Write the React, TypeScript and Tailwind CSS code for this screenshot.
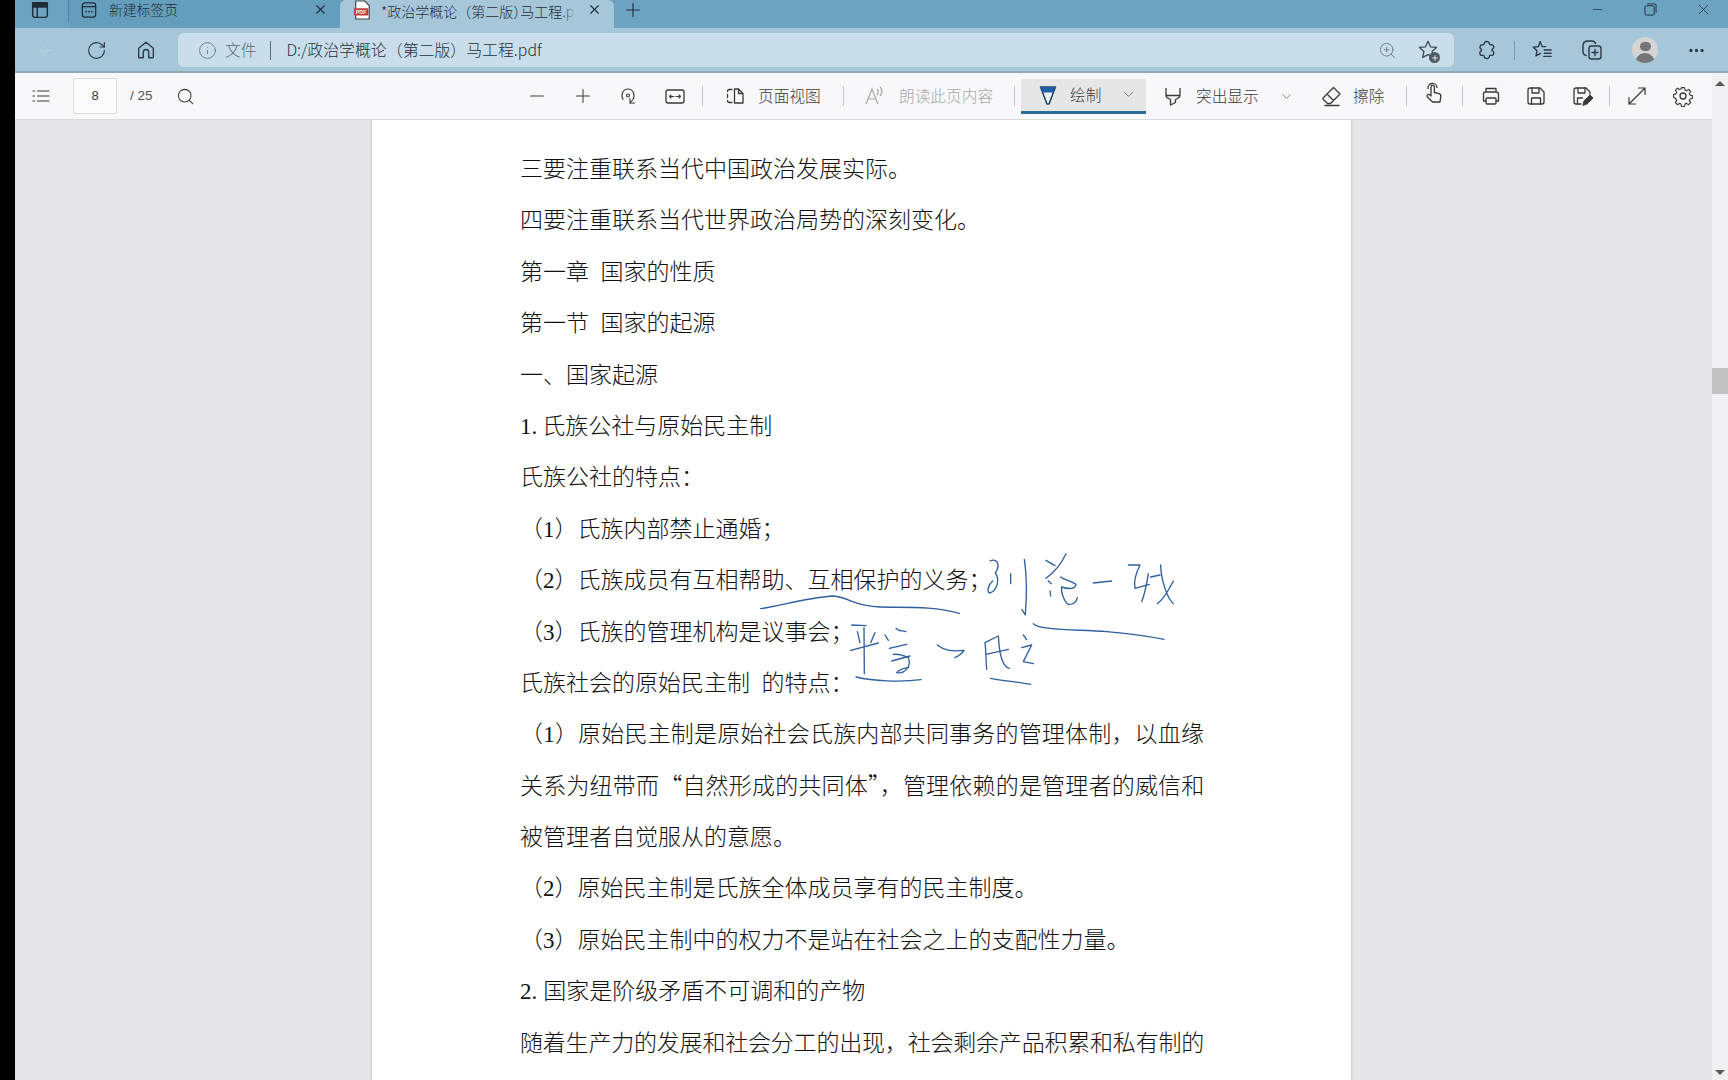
import type { ReactNode } from 'react';
import { ArrowLeft, ChevronDown, Info, Minus, MoreHorizontal, Plus, RotateCw, Search, X, ZoomIn } from 'lucide-react';

const BODY_FONT = 'font-["Liberation_Serif","Noto_Sans_CJK_SC",serif]';

type Line = { text: ReactNode; justify?: boolean; tight?: boolean };

const LINES: Line[] = [
  { text: '三要注重联系当代中国政治发展实际。' },
  { text: '四要注重联系当代世界政治局势的深刻变化。' },
  { text: '第一章  国家的性质' },
  { text: '第一节  国家的起源' },
  { text: '一、国家起源' },
  { text: <>1.<span className="ml-[5px]">氏族公社与原始民主制</span></> },
  { text: '氏族公社的特点：' },
  { text: '（1）氏族内部禁止通婚；' },
  { text: '（2）氏族成员有互相帮助、互相保护的义务；' },
  { text: '（3）氏族的管理机构是议事会；' },
  { text: '氏族社会的原始民主制  的特点：' },
  { text: '（1）原始民主制是原始社会氏族内部共同事务的管理体制，以血缘', justify: true },
  { text: <>关系为纽带而<span className="font-['Noto_Sans_CJK_SC'] leading-[0]">“</span>自然形成的共同体<span className="font-['Noto_Sans_CJK_SC'] leading-[0]">”</span>，管理依赖的是管理者的威信和</>, justify: true, tight: true },
  { text: '被管理者自觉服从的意愿。' },
  { text: '（2）原始民主制是氏族全体成员享有的民主制度。' },
  { text: '（3）原始民主制中的权力不是站在社会之上的支配性力量。' },
  { text: <>2.<span className="ml-[6px]">国家是阶级矛盾不可调和的产物</span></> },
  { text: '随着生产力的发展和社会分工的出现，社会剩余产品积累和私有制的', justify: true, tight: true },
];

function Ico({ children, className = '' }: { children: ReactNode; className?: string }) {
  return (
    <svg viewBox="0 0 24 24" fill="none" stroke="currentColor" strokeWidth="1.5" strokeLinecap="round" strokeLinejoin="round" className={`w-6 h-6 shrink-0 ${className}`}>
      {children}
    </svg>
  );
}

function Sep({ className = '' }: { className?: string }) {
  return <div className={`w-px h-[20px] bg-[#c9c9cc] shrink-0 ${className}`} />;
}

function Label({ children, className = '' }: { children: ReactNode; className?: string }) {
  return <span className={`text-[15.7px] whitespace-nowrap shrink-0 ${className}`}>{children}</span>;
}

function TabBar() {
  return (
    <div className="h-[28px] flex items-center bg-[#6ba3c1] text-[#1f2d36] shrink-0">
      <Ico className="ml-[14px] mb-[9px] !w-[22px] !h-[22px] mr-[2px]">
        <rect x="4" y="4" width="16" height="16" rx="2.5" />
        <path d="M4 8.5h16M9 8.5V20" />
        <path d="M4 4h16v4.5H4z" fill="currentColor" />
      </Ico>
      <div className="w-px h-[22px] self-start bg-[#4f86a4] ml-[15px]" />
      <div className="w-[271px] h-full flex items-center pb-[9px] bg-[#659dbc] rounded-br-[6px]">
        <Ico className="ml-[10px] !w-[20px] !h-[20px]">
          <rect x="4" y="3.5" width="16" height="17" rx="3" />
          <path d="M4 8h16" />
          <path d="M8.5 14h.01M12 14h.01M15.5 14h.01" strokeWidth="2" />
        </Ico>
        <span className="ml-[10px] text-[13.8px] font-light">新建标签页</span>
        <X size={15} strokeWidth={1.8} className="ml-[135px]" />
      </div>
      <div className="w-[274px] h-full flex items-center pb-[9px] bg-[#a6c7da] rounded-t-[6px]">
        <svg viewBox="0 0 20 22" className="w-[18px] h-[20px] ml-[13px] shrink-0">
          <path d="M3 1h10l5 5v15H3z" fill="#fff" stroke="#444" strokeWidth="1.3" />
          <rect x="1" y="9" width="16" height="8" rx="1" fill="#c43b3b" />
          <text x="9" y="15.4" textAnchor="middle" fontSize="6" fontWeight="700" fill="#fff" fontFamily="Liberation Sans">PDF</text>
        </svg>
        <div className="relative ml-[10px] w-[195px] overflow-hidden">
          <span className="text-[14px] font-light whitespace-nowrap">*政治学概论（第二版<span className="[font-feature-settings:'halt']">）</span>马工程.p</span>
          <div className="absolute right-0 top-0 bottom-0 w-[14px] bg-gradient-to-r from-transparent to-[#a6c7da]" />
        </div>
        <X size={15} strokeWidth={1.8} className="ml-[11px]" />
      </div>
      <Plus size={22} strokeWidth={1.2} className="ml-[8px] mb-[9px]" />
      <div className="flex-1" />
      <Minus size={15} strokeWidth={1.1} className="mr-[39px] mb-[9px]" />
      <svg viewBox="0 0 14 14" fill="none" stroke="currentColor" strokeWidth="1" className="w-[13px] h-[13px] mr-[38px] mb-[9px]">
        <rect x="1" y="3" width="10" height="10" rx="1.5" />
        <path d="M3.5 1h8a1.5 1.5 0 0 1 1.5 1.5v8" />
      </svg>
      <X size={17} strokeWidth={1} className="mr-[16px] mb-[9px]" />
    </div>
  );
}

function AddressBar() {
  return (
    <div className="h-[45px] flex items-start pt-[5px] bg-[#a6c7da] border-b-[2px] border-[#8fa9b9] text-[#2b3a44] shrink-0">
      <div className="flex items-center h-[34px]">
        <ArrowLeft size={19} strokeWidth={1} className="ml-[21px] text-[#bed6e3]" />
        <RotateCw size={21} strokeWidth={1.3} className="ml-[31px]" />
        <svg viewBox="0 0 24 24" fill="none" stroke="currentColor" strokeWidth="1.5" strokeLinejoin="round" className="w-[22px] h-[22px] ml-[28px]">
          <path d="M12 3.5 4 10v9.5a1 1 0 0 0 1 1h4v-6a3 3 0 0 1 6 0v6h4a1 1 0 0 0 1-1V10z" />
        </svg>
      </div>
      <div className="ml-[21px] w-[1276px] h-[34px] flex items-center bg-[#c9deea] rounded-[6px]">
        <Info size={19} strokeWidth={1} className="ml-[20px] text-[#5b6a74]" />
        <span className="ml-[8px] mb-[1px] text-[15.7px] font-light text-[#5b6a74]">文件</span>
        <div className="w-px h-[19px] bg-[#5b6a74] ml-[14px]" />
        <span className="ml-[15px] mb-[1px] text-[15.9px] font-light whitespace-nowrap text-[#24323c]">D:/政治学概论（第二版）马工程.pdf</span>
        <div className="flex-1" />
        <ZoomIn size={19} strokeWidth={1} className="text-[#5b6a74]" />
        <div className="relative ml-[20px] mr-[15px] w-[22px] h-[22px]">
          <svg viewBox="0 0 24 24" fill="none" stroke="currentColor" strokeWidth="1.4" strokeLinejoin="round" className="w-[22px] h-[22px] text-[#3b4a54]">
            <path d="M12 2.5l2.8 6 6.6.7-5 4.4 1.4 6.5L12 17l-5.8 3.1 1.4-6.5-5-4.4 6.6-.7z" />
          </svg>
          <div className="absolute -right-[1px] -bottom-[2px] w-[11px] h-[11px] rounded-full bg-[#4f5a62] text-white flex items-center justify-center">
            <Plus size={8} strokeWidth={2.5} />
          </div>
        </div>
      </div>
      <div className="flex items-center h-[34px]">
        <svg viewBox="0 0 24 24" fill="none" stroke="currentColor" strokeWidth="1.5" strokeLinejoin="round" className="w-[22px] h-[22px] ml-[22px]">
          <path d="M9 5c.5-3 5-3 5.500 0 .2 1 1 1.500 2 1.300 2.700-.5 4 3 1.700 4.500-1 .6-1 1.800 0 2.500 2.300 1.500 1 5-1.700 4.500-1-.2-1.800.3-2 1.300-.5 3-5 3-5.500 0-.2-1-1-1.500-2-1.300-2.700.5-4-3-1.700-4.500 1-.7 1-1.900 0-2.500C3.500 9.800 4.300 6 7 6.300c1 .2 1.800-.3 2-1.300z" />
        </svg>
        <div className="w-px h-[19px] bg-[#7d9cae] ml-[16px]" />
        <svg viewBox="0 0 24 24" fill="none" stroke="currentColor" strokeWidth="1.5" strokeLinejoin="round" strokeLinecap="round" className="w-[22px] h-[22px] ml-[16px]">
          <path d="M10 3l2.200 5.300H16M8 8.300l-5.500.7 4 3.800-1 5.700 5-2.800M14.500 12H22M14.500 15.500H22M14 19h8" />
          <path d="M10 3 8 8.300" />
        </svg>
        <svg viewBox="0 0 24 24" fill="none" stroke="currentColor" strokeWidth="1.4" strokeLinejoin="round" strokeLinecap="round" className="w-[24px] h-[24px] ml-[27px]">
          <rect x="9" y="8" width="12" height="13" rx="2.500" />
          <path d="M15 11.500v6M12 14.500h6" />
          <path d="M6 17.500c-2-.5-3-2-3-4V8c0-3 2-5 5-5h4c1.500 0 3 1 3.500 2.500" />
        </svg>
        <div className="ml-[28px] w-[26px] h-[26px] rounded-full bg-[#d4d4d4] overflow-hidden flex flex-col items-center">
          <div className="w-[11px] h-[11px] rounded-full bg-[#757575] mt-[5px]" />
          <div className="w-[20px] h-[12px] rounded-t-full bg-[#757575] mt-[2px]" />
        </div>
        <MoreHorizontal size={19} strokeWidth={2.2} className="ml-[29px]" />
      </div>
    </div>
  );
}

function PdfToolbar() {
  return (
    <div className="h-[47px] flex items-center bg-[#f8f7f9] border-b border-[#dcdcdc] text-[#3a3a3a] shrink-0">
      <Ico className="ml-[14px]">
        <path d="M8.500 7H20M8.500 12H20M8.500 17H20" strokeWidth="1.200" />
        <path d="M4 7h1.500M4 12h1.500M4 17h1.500" strokeWidth="1.200" />
      </Ico>
      <div className="ml-[20px] w-[44px] h-[36px] flex items-center justify-center bg-[#fbfbfb] border border-[#dcdcdc] rounded-[2px] font-['Liberation_Sans',sans-serif] text-[13px]">8</div>
      <span className="ml-[13px] w-[23px] font-['Liberation_Sans',sans-serif] text-[13.5px] text-[#555] whitespace-nowrap">/ 25</span>
      <Search size={19} strokeWidth={1.3} className="ml-[23px]" />
      <Minus size={22} strokeWidth={1.1} className="ml-[331px]" />
      <Plus size={22} strokeWidth={1.1} className="ml-[24px]" />
      <Ico className="ml-[22px]">
        <path d="M7 15.500C4.500 11 7 5 12 5s7.500 6 5 10.500L14 19" strokeWidth="1.100" />
        <path d="M14 14.500V19h4.500" strokeWidth="1.100" />
        <circle cx="12" cy="11.500" r="1.500" strokeWidth="1.100" />
      </Ico>
      <Ico className="ml-[23px]">
        <rect x="3" y="6" width="18" height="13" rx="2" strokeWidth="1.300" />
        <path d="M6.500 12.500h4.500M6.500 12.500l1.500-1.500M6.500 12.500l1.500 1.500M17.500 12.500H13M17.500 12.500l-1.500-1.500M17.500 12.500l-1.500 1.500" strokeWidth="1.100" />
      </Ico>
      <Sep className="ml-[15px]" />
      <Ico className="ml-[20px]">
        <path d="M9 5.500H6.500a2 2 0 0 0-2 2M4.500 10.500v3M4.500 16.500a2 2 0 0 0 2 2H9" strokeWidth="1.300" />
        <path d="M11.500 5v14H20V9.500L15.500 5zM15.500 5v4.500H20" strokeWidth="1.300" />
      </Ico>
      <Label className="ml-[11px] w-[64px] font-light">页面视图</Label>
      <Sep className="ml-[21px]" />
      <svg viewBox="0 0 24 24" className="w-6 h-6 ml-[18px] shrink-0 text-[#a8a8a8]" fill="none" stroke="currentColor" strokeWidth="1.200">
        <path d="M4 20 10 5l6 15M6.200 15h7.600M15 5c1.500 1.500 1.500 4 0 6M18 3c2.500 2.500 2.500 6 0 9" />
      </svg>
      <Label className="ml-[13px] w-[94px] font-light text-[#a8a8a8]">朗读此页内容</Label>
      <Sep className="ml-[21px]" />
      <div className="ml-[6px] w-[125px] h-[35px] flex items-center bg-[#e6e6e6] border-b-[3px] border-[#2b6c92]">
        <svg viewBox="0 0 24 24" className="w-6 h-6 ml-[15px] shrink-0">
          <path d="M4.500 4h15L13 21h-2z" fill="#eaf1f7" stroke="#1b3f5f" strokeWidth="1.500" strokeLinejoin="round" />
          <path d="M4.500 4h15l-2.200 5.500H6.700z" fill="#1c5fa8" />
        </svg>
        <Label className="ml-[10px] w-[30px] font-light">绘制</Label>
        <ChevronDown size={15} strokeWidth={1} className="ml-[21px]" />
      </div>
      <svg viewBox="0 0 24 24" fill="none" stroke="currentColor" strokeWidth="1.300" strokeLinejoin="round" className="w-6 h-6 ml-[15px] shrink-0">
        <path d="M5 4v7.500h14V4M5 11.500c0 2.500 3 3 4.500 4V21l5-2.500v-3c1.500-1 4.500-1.500 4.500-4" />
      </svg>
      <Label className="ml-[11px] w-[64px] font-light">突出显示</Label>
      <ChevronDown size={15} strokeWidth={1} className="ml-[19px]" />
      <svg viewBox="0 0 24 24" fill="none" stroke="currentColor" strokeWidth="1.300" strokeLinejoin="round" strokeLinecap="round" className="w-6 h-6 ml-[25px] shrink-0">
        <path d="M4 14 14.500 3.500 21 10 11.500 19.500H8.500L4 15zM8 10l6.500 6.500M6 21.500h14" />
      </svg>
      <Label className="ml-[10px] w-[32px] font-light">擦除</Label>
      <Sep className="ml-[21px]" />
      <svg viewBox="0 0 24 24" fill="none" stroke="currentColor" strokeWidth="1.300" strokeLinejoin="round" strokeLinecap="round" className="w-6 h-6 ml-[14px] mb-[4px] shrink-0">
        <path d="M10 14V5a1.700 1.700 0 0 1 3.400 0v5.500l4.600 1.200c1.300.4 2 1.500 1.800 2.800l-.8 5.500H11.500L6.500 15c-1.300-1.500.6-3.400 2.200-2.200L10 14z" />
        <path d="M7 6.500a4.500 4.500 0 0 1 9-1" />
      </svg>
      <Sep className="ml-[17px]" />
      <Ico className="ml-[16px]">
        <path d="M7 8V4.500h10V8M7 17H4.500V10a2 2 0 0 1 2-2h11a2 2 0 0 1 2 2v7H17" strokeWidth="1.300" />
        <rect x="7" y="14" width="10" height="6" rx="1" strokeWidth="1.300" />
      </Ico>
      <Ico className="ml-[21px]">
        <path d="M6 4h10l4 4v10a2 2 0 0 1-2 2H6a2 2 0 0 1-2-2V6a2 2 0 0 1 2-2z" strokeWidth="1.300" />
        <path d="M8 4v5h7V4M7.500 20v-6h9v6" strokeWidth="1.300" />
      </Ico>
      <Ico className="ml-[22px]">
        <path d="M11 20H6a2 2 0 0 1-2-2V6a2 2 0 0 1 2-2h10l4 4v2" strokeWidth="1.300" />
        <path d="M8 4v5h7V4M7.500 20v-6h5" strokeWidth="1.300" />
        <path d="M13 21l1-4 6-6 3 3-6 6z" fill="currentColor" strokeWidth="1" />
      </Ico>
      <Sep className="ml-[15px]" />
      <Ico className="ml-[15px]">
        <path d="M4 20 20 4M13.500 4H20v6.500M4 13.500V20h6.500" strokeWidth="1.200" />
      </Ico>
      <Ico className="ml-[22px]">
        <path d="M10.300 3h3.400l.5 2.700 1.800.8 2.300-1.500 2.400 2.400-1.500 2.300.8 1.800 2.700.5v3.400l-2.700.5-.8 1.800 1.500 2.300-2.400 2.400-2.300-1.500-1.800.8-.5 2.700h-3.400l-.5-2.700-1.800-.8-2.300 1.500-2.400-2.400 1.500-2.300-.8-1.800L1.300 14v-3.400l2.700-.5.8-1.800-1.500-2.300 2.400-2.400 2.300 1.500 1.800-.8z" transform="translate(12 12) scale(.88) translate(-12 -12.500)" strokeWidth="1.300" />
        <circle cx="12" cy="12" r="3" strokeWidth="1.300" />
      </Ico>
    </div>
  );
}

function Handwriting() {
  return (
    <svg viewBox="0 0 1380 450" fill="none" stroke="#2f5f9f" strokeWidth="4" strokeLinecap="round" strokeLinejoin="round" className="absolute left-[368px] top-[421px] w-[460px] h-[150px]">
      <path d="M62 203C120 195 200 170 280 165C330 170 340 195 420 198C500 200 580 195 658 217" />
      <path d="M750 60C772 50 782 72 766 96M766 96C780 115 772 150 748 156C740 150 746 130 758 120" />
      <path d="M812 98L812 128" />
      <path d="M853 55C860 100 860 170 856 222L846 206" />
      <path d="M918 58L945 74M978 38C962 72 945 92 918 112M925 120L934 128M930 150L932 165" />
      <path d="M962 108C975 118 992 118 1008 130C1006 145 985 145 965 138C962 155 975 185 985 190C1000 192 1010 182 1012 170" />
      <path d="M1060 126L1115 120" />
      <path d="M1165 72L1200 72C1190 92 1180 118 1185 142L1228 130" />
      <path d="M1225 98C1220 130 1212 165 1205 182M1232 108L1260 102M1262 72C1262 110 1280 170 1300 188M1300 120C1285 150 1270 175 1252 188" />
      <path d="M880 248C900 268 1000 265 1100 272C1170 278 1220 285 1272 295" />
      <path d="M335 252L378 254M352 272L360 305M405 275L392 305M332 328L415 306M372 260L373 398" />
      <path d="M435 282L445 298M468 262L480 270M480 268L498 272M448 322L500 310M460 340C480 338 495 345 505 350M455 360L510 345M505 350C515 375 495 400 470 395C478 385 492 382 505 380" />
      <path d="M348 408C400 420 480 424 543 416" />
      <path d="M592 312C612 328 632 332 672 328C665 340 655 345 645 350" />
      <path d="M735 305C738 330 738 360 740 385M735 305L775 285L778 320M738 340L805 325M778 320C782 350 790 378 808 382" />
      <path d="M850 282L860 296M845 320L875 312L850 362L880 368" />
      <path d="M752 412C790 420 830 422 872 430" />
    </svg>
  );
}

function PdfPage() {
  return (
    <div className={`relative ml-[357px] w-[979px] h-[961px] overflow-hidden bg-white shadow-[0_0_3px_rgba(0,0,0,0.25)] pt-[24px] pl-[148px] text-[23px] leading-[51.4px] font-light text-[#111] ${BODY_FONT}`}>
      {LINES.map((line, i) => (
        <div
          key={i}
          className={`h-[51.4px] ${line.justify ? 'w-[684px] whitespace-nowrap [text-align-last:justify]' : 'whitespace-pre'} ${line.tight ? 'tracking-[-0.25px]' : ''}`}
        >
          {line.text}
        </div>
      ))}
      <Handwriting />
    </div>
  );
}

function ScrollTrack() {
  return (
    <div className="w-[16px] flex flex-col items-center bg-[#f1f0f2] shrink-0">
      <div className="mt-[8px] w-0 h-0 border-x-[5px] border-x-transparent border-b-[5px] border-b-[#5a5a5a]" />
      <div className="mt-[282px] w-full h-[26px] bg-[#c2c2c2]" />
      <div className="flex-1" />
      <div className="mb-[5px] w-0 h-0 border-x-[5px] border-x-transparent border-t-[5px] border-t-[#5a5a5a]" />
    </div>
  );
}

export default function App() {
  return (
    <div className="h-screen w-full flex overflow-hidden bg-black font-['Noto_Sans_CJK_SC',sans-serif]">
      <div className="w-[15px] shrink-0 bg-black" />
      <div className="flex-1 flex flex-col min-w-0">
        <TabBar />
        <AddressBar />
        <div className="flex-1 flex min-h-0">
          <div className="flex-1 flex flex-col min-w-0">
            <PdfToolbar />
            <div className="flex-1 min-h-0 overflow-hidden bg-[#e6e6e8]">
              <PdfPage />
            </div>
          </div>
          <ScrollTrack />
        </div>
      </div>
    </div>
  );
}
